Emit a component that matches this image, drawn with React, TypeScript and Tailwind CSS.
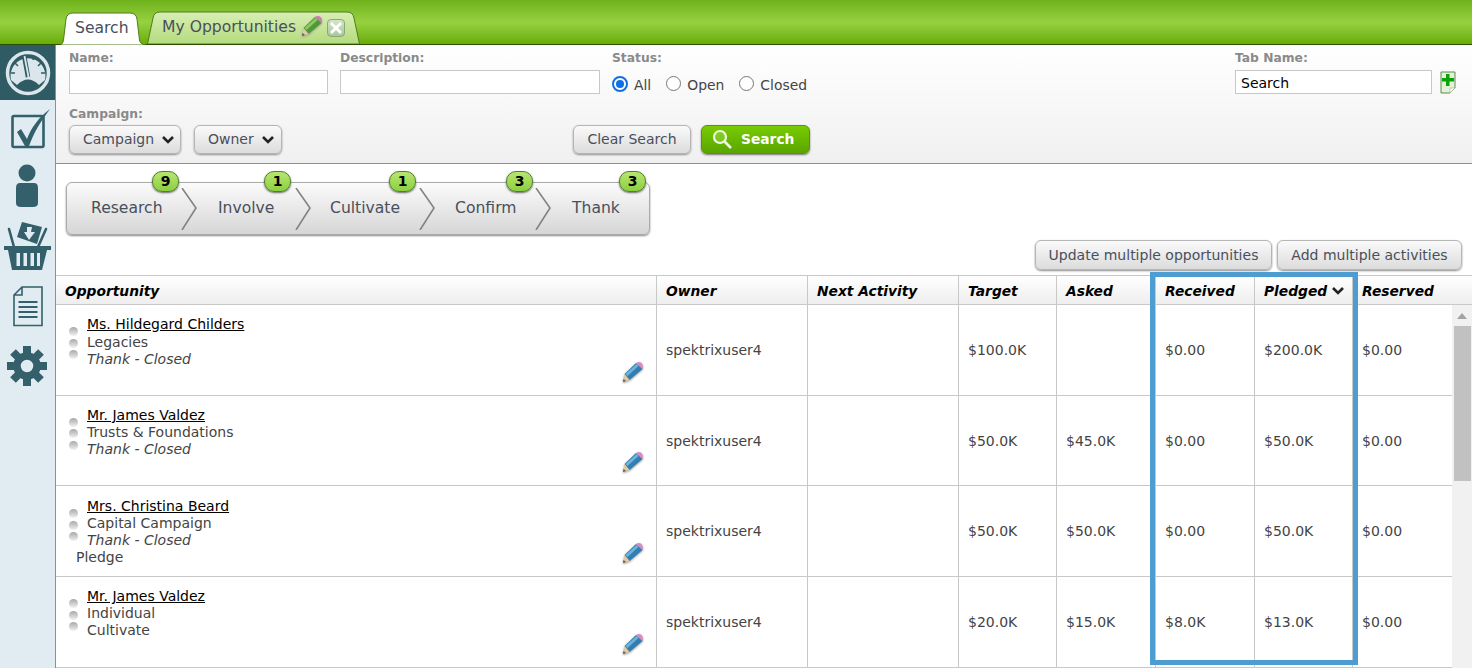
import React from "react";

const font = { fontFamily: '"DejaVu Sans", Verdana, sans-serif' };

function Gauge() {
  return (
    <svg width="46" height="46" viewBox="0 0 46 46">
      <circle cx="23" cy="23" r="20.5" fill="none" stroke="#dbe6ec" strokeWidth="3.5" />
      <path d="M6 30 A17.500 17.500 0 1 1 40 30 L34 35 Q23 24 12 35 Z" fill="#dbe6ec" />
      <path d="M19 5 L23 27" stroke="#2f5b64" strokeWidth="4.5" />
      <path d="M19.500 6 L23.500 27" stroke="#dbe6ec" strokeWidth="1.8" />
      <path d="M10 13l3 3M36 13l-3 3M6 23h4M40 23h-4M29 6l-1 4" stroke="#2f5b64" strokeWidth="1.5" />
    </svg>
  );
}
function CheckIcon() {
  return (
    <svg width="40" height="42" viewBox="0 0 40 42">
      <rect x="1.500" y="8" width="31" height="31" rx="1.5" fill="none" stroke="#33606a" strokeWidth="2.6" />
      <path d="M6 24 L10 21 L16 31 C20 20 28 9 39 1 C30 13 23 24 18 38 L14 38 Z" fill="#33606a" />
    </svg>
  );
}
function Person() {
  return (
    <svg width="24" height="44" viewBox="0 0 24 44">
      <circle cx="12" cy="9" r="8.5" fill="#33606a" />
      <path d="M5 19 H19 Q23 19 23 24 V39 Q23 43 18 43 H6 Q1 43 1 39 V24 Q1 19 5 19 Z" fill="#33606a" />
    </svg>
  );
}
function Basket() {
  return (
    <svg width="47" height="50" viewBox="0 0 47 50">
      <path d="M18 1 L38 6 L33 23 L13 16 Z" fill="#33606a" />
      <path d="M23 6 h5 l-1 5 h4 l-6 8 l-5 -8 h3 Z" fill="#e0ebf2" />
      <path d="M5 8 L10 26 M42 8 L34 26" stroke="#33606a" strokeWidth="2.6" strokeLinecap="round" />
      <path d="M0 25 H47 V29 H43 L38 49 H8 L4 29 H0 Z" fill="#33606a" />
      <path d="M12.500 32h3.500v13h-3.500zM19.500 32h3.500v13h-3.500zM26.500 32h3.500v13h-3.500zM33 32h3v13h-3z" fill="#e0ebf2" />
    </svg>
  );
}
function Doc() {
  return (
    <svg width="30" height="41" viewBox="0 0 30 41">
      <path d="M9 1 H29 V39.500 H1 V9 Z M9 1 V9 H1" fill="none" stroke="#33606a" strokeWidth="1.6" />
      <path d="M5.500 15h19v2h-19zM5.500 20h19v2h-19zM5.500 25h19v2h-19zM5.500 30h19v2h-19z" fill="#33606a" />
    </svg>
  );
}
function Gear() {
  return (
    <svg width="40" height="40" viewBox="0 0 40 40">
      <circle cx="20" cy="20" r="10" fill="none" stroke="#33606a" strokeWidth="7.5" />
      <g stroke="#33606a" strokeWidth="8">
        <path d="M20 0v8M20 32v8M0 20h8M32 20h8M6 6l6 6M28 28l6 6M34 6l-6 6M12 28l-6 6" />
      </g>
    </svg>
  );
}
function Pencil({ body, tip, shade }: { body: string; tip: string; shade: string }) {
  return (
    <svg className="drop-shadow-[0_1px_1px_#999]" width="22" height="22" viewBox="0 0 22 22">
      <path d="M14 2 L20.500 8 L7.500 19 L2.500 13 Z" fill={body} />
      <path d="M3.500 13 L14.500 3 L16.500 5 L5.500 15 Z" fill={shade} opacity="0.7" />
      <path d="M14 2 Q17 0 19.500 2 Q21.800 4.500 20.500 8 Z" fill={tip} />
      <path d="M2.500 13 L7.500 19 L1 21 Z" fill="#e2c9a0" />
      <path d="M1.500 18 L4 20 L1 21 Z" fill="#555" />
    </svg>
  );
}
const BluePencil = () => <Pencil body="#2f7fb5" tip="#d98cc0" shade="#8cc6ea" />;
const GreenPencil = () => <Pencil body="#4f9a35" tip="#d478b4" shade="#a8dc7a" />;

function Caret() {
  return (
    <svg width="14" height="10" viewBox="0 0 14 10">
      <path d="M2 2 L7 7 L12 2" fill="none" stroke="#222" strokeWidth="2.600" />
    </svg>
  );
}

function Dot() {
  return <span className="block w-[9px] h-[9px] rounded-full bg-gradient-to-b from-[#a8a8a8] to-[#f2f2f2]" />;
}

const btn =
  "h-[29px] rounded-[6px] border border-[#b5b5b5] bg-gradient-to-b from-[#fafafa] to-[#dcdcdc] shadow-[0_1px_2px_#8f8f8f] text-[14px] text-[#4a4f5c] flex items-center";

const label = "text-[12.3px] leading-[16px] font-bold text-[#8a8a8a]";
const input = "h-[24px] border border-[#c8c8c8] bg-white";

function Radio({ checked, text, className }: { checked?: boolean; text: string; className?: string }) {
  return (
    <span className={"flex items-center gap-[6px] text-[13.9px] text-[#444] " + (className ?? "")}>
      {checked ? (
        <span className="w-[16px] h-[16px] rounded-full border-2 border-[#0f6fe8] flex items-center justify-center bg-white">
          <span className="block w-[8px] h-[8px] rounded-full bg-[#0f6fe8]" />
        </span>
      ) : (
        <span className="w-[15px] h-[15px] rounded-full border border-[#777] bg-white" />
      )}
      <span className="pt-[2px]">{text}</span>
    </span>
  );
}

const stages = [
  { name: "Research", count: "9", w: "w-[130px]", pl: "pl-[24px]", badge: "right-[18px]", chevron: true },
  { name: "Involve", count: "1", w: "w-[114px]", pl: "pl-[21px]", badge: "right-[20px]", chevron: true },
  { name: "Cultivate", count: "1", w: "w-[124px]", pl: "pl-[19px]", badge: "right-[19px]", chevron: true },
  { name: "Confirm", count: "3", w: "w-[116px]", pl: "pl-[20px]", badge: "right-[18px]", chevron: true },
  { name: "Thank", count: "3", w: "w-[100px]", pl: "pl-[21px]", badge: "right-[5px]", chevron: false },
];

function Stage({ s }: { s: (typeof stages)[number] }) {
  return (
    <div className={"relative h-full flex items-center shrink-0 text-[15.6px] text-[#4a4f5c] " + s.w + " " + s.pl}>
      <span>{s.name}</span>
      {s.chevron && (
        <svg className="absolute right-0 top-[5px]" width="16" height="42" viewBox="0 0 16 42">
          <path d="M1 0 L15 20 L1 42" fill="none" stroke="#828282" strokeWidth="1.6" />
        </svg>
      )}
      <span
        className={
          "absolute -top-[12px] w-[27px] h-[21px] rounded-[10px] border border-[#4e7f2a] bg-gradient-to-b from-[#b8e66f] to-[#8ccf3f] shadow-[0_1px_2px_#666] flex items-center justify-center text-[14px] font-bold text-black " +
          s.badge
        }
      >
        {s.count}
      </span>
    </div>
  );
}

const cols = "grid grid-cols-[600px_151px_151px_98px_99px_99px_98px_100px]";

const rows = [
  { name: "Ms. Hildegard Childers", type: "Legacies", stage: "Thank - Closed", extra: "", target: "$100.0K", asked: "", rec: "$0.00", pl: "$200.0K", pt: "pt-[11px]", gap: "mb-[1px]" },
  { name: "Mr. James Valdez", type: "Trusts & Foundations", stage: "Thank - Closed", extra: "", target: "$50.0K", asked: "$45.0K", rec: "$0.00", pl: "$50.0K", pt: "pt-[11px]", gap: "" },
  { name: "Mrs. Christina Beard", type: "Capital Campaign", stage: "Thank - Closed", extra: "Pledge", target: "$50.0K", asked: "$50.0K", rec: "$0.00", pl: "$50.0K", pt: "pt-[12px]", gap: "" },
  { name: "Mr. James Valdez", type: "Individual", stage: "", extra: "", plain: "Cultivate", target: "$20.0K", asked: "$15.0K", rec: "$8.0K", pl: "$13.0K", pt: "pt-[11px]", gap: "" },
] as { name: string; type: string; stage: string; extra: string; plain?: string; target: string; asked: string; rec: string; pl: string; pt: string; gap: string }[];

const cell = "border-l border-[#c8c8c8] pl-[9px] pt-[1px] flex items-center text-[14px] text-[#444]";
const head = "border-l border-[#c8c8c8] pl-[9px] pt-[2px] flex items-center text-[13.8px] font-bold italic text-black";

export default function App() {
  return (
    <div style={font} className="relative w-[1472px] h-[668px] overflow-hidden bg-white flex flex-col">
      {/* top green bar */}
      <div className="h-[45px] shrink-0 bg-gradient-to-b from-[#6eb21a] via-[#97d13f] to-[#69ad00] border-b border-[#2c4f00] pl-[60px] flex items-end gap-[1px]">
        <div className="relative w-[86px] h-[33px] -mb-px pl-[15px] pt-[1px] flex items-center text-[15.6px] text-[#4a4f5c]">
          <svg className="absolute inset-0" width="86" height="33" viewBox="0 0 86 33">
            <path d="M0.500 33 Q3 32 3.500 28 L6 7 Q7 1 13 1 H70 Q76 1 77 7 L79.500 28 Q80 32 85.500 33 Z" fill="#fff" stroke="#4d7d1c" />
          </svg>
          <span className="relative">Search</span>
        </div>
        <div className="relative w-[213px] h-[33px] pl-[15px] flex items-center text-[15.6px] text-[#4a4f5c]">
          <svg className="absolute inset-0" width="213" height="33" viewBox="0 0 213 33">
            <defs>
              <linearGradient id="tabg" x1="0" y1="0" x2="0" y2="1">
                <stop offset="0" stopColor="#d8efb4" />
                <stop offset="1" stopColor="#b4db7e" />
              </linearGradient>
            </defs>
            <path d="M0.500 33 L6 7 Q7 1 13 1 H200 Q206 1 207 7 L212.500 33 Z" fill="url(#tabg)" stroke="#4d7d1c" />
          </svg>
          <span className="relative">My Opportunities</span>
          <span className="relative ml-[5px] -mt-[3px]"><GreenPencil /></span>
          <span className="relative ml-[4px] w-[18px] h-[18px] rounded-[4px] border border-[#8aa87a] bg-gradient-to-b from-[#d5e3ca] to-[#a9c79a] flex items-center justify-center">
            <svg width="14" height="14" viewBox="0 0 14 14">
              <path d="M2 2 L12 12 M12 2 L2 12" stroke="#fff" strokeWidth="3" />
            </svg>
          </span>
        </div>
      </div>

      <div className="flex flex-1 min-h-0">
        {/* sidebar */}
        <div className="w-[56px] shrink-0 bg-[#e0ebf2] border-r border-[#8f8f8f] flex flex-col items-center">
          <div className="w-[55px] h-[55px] bg-[#2f5b64] flex items-center justify-center">
            <Gauge />
          </div>
          <div className="mt-[8px] ml-[6px]"><CheckIcon /></div>
          <div className="mt-[14px] -ml-[1px]"><Person /></div>
          <div className="mt-[13px]"><Basket /></div>
          <div className="mt-[15px]"><Doc /></div>
          <div className="mt-[19px] -ml-[1px]"><Gear /></div>
        </div>

        {/* main */}
        <div className="flex-1 min-w-0 flex flex-col">
          {/* search panel */}
          <div className="h-[119px] shrink-0 border-b border-[#8f8f8f] bg-gradient-to-b from-white to-[#f0f0f0] pl-[13px] pt-[5px]">
            <div className="flex">
              <div className="w-[259px]">
                <div className={label}>Name:</div>
                <div className={input + " mt-[4px]"} />
              </div>
              <div className="w-[260px] ml-[12px]">
                <div className={label}>Description:</div>
                <div className={input + " mt-[4px]"} />
              </div>
              <div className="w-[623px] ml-[12px]">
                <div className={label}>Status:</div>
                <div className="flex items-center h-[24px] mt-[6px]">
                  <Radio checked text="All" />
                  <Radio text="Open" className="ml-[15px]" />
                  <Radio text="Closed" className="ml-[15px]" />
                </div>
              </div>
              <div className="w-[197px]">
                <div className={label}>Tab Name:</div>
                <div className={input + " mt-[4px] flex items-center pl-[5px] pt-[2px] text-[14px] text-black"}>Search</div>
              </div>
              <svg className="ml-[8px] mt-[21px]" width="16" height="23" viewBox="0 0 16 23">
                <path d="M1 1 H15 V17 L10 22 H1 Z" fill="#e4f0d8" stroke="#5d8a4f" />
                <path d="M10 22 V17 H15 Z" fill="#fff" stroke="#9ab08f" strokeWidth="0.6" />
                <path d="M6 3h3.500v4H14v3.500H9.500V15H6v-4.500H2V7h4Z" fill="#0aa30a" />
              </svg>
            </div>
            <div className="flex items-end mt-[10px]">
              <div className="w-[504px]">
                <div className={label}>Campaign:</div>
                <div className="flex mt-[3px] gap-[13px]">
                  <div className={btn + " w-[112px] gap-[7px] pl-[13px]"}>Campaign <Caret /></div>
                  <div className={btn + " w-[88px] gap-[7px] pl-[13px]"}>Owner <Caret /></div>
                </div>
              </div>
              <div className={btn + " w-[118px] justify-center"}>Clear Search</div>
              <div className="h-[29px] w-[109px] ml-[10px] pl-[10px] rounded-[6px] border border-[#5b9409] bg-gradient-to-b from-[#78cc00] to-[#5aa500] shadow-[0_1px_2px_#777] flex items-center gap-[8px] text-[13.8px] font-bold text-white">
                <svg width="21" height="21" viewBox="0 0 21 21">
                  <circle cx="8" cy="8" r="6" fill="#9fdc5c" fillOpacity="0.4" stroke="#f0f8e0" strokeWidth="2.2" />
                  <path d="M12.500 12.500 L19 19" stroke="#f0f8e0" strokeWidth="2.6" />
                </svg>
                Search
              </div>
            </div>
          </div>

          {/* pipeline and actions */}
          <div className="h-[111px] shrink-0 relative pl-[10px] pt-[18px]">
            <div className="h-[53px] w-[584px] flex rounded-[6px] border border-[#aaa] bg-gradient-to-b from-[#fbfbfb] to-[#d6d6d6] shadow-[0_1px_2px_#888]">
              {stages.map((s) => (
                <Stage key={s.name} s={s} />
              ))}
            </div>
            <div className="flex justify-end gap-[5px] pr-[10px] mt-[5px]">
              <div className={btn + " w-[237px] h-[30px] justify-center"}>Update multiple opportunities</div>
              <div className={btn + " w-[185px] h-[30px] justify-center"}>Add multiple activities</div>
            </div>
          </div>

          {/* table */}
          <div className="flex-1 min-h-0 border-t border-[#c8c8c8] flex flex-col">
            <div className={cols + " w-[1416px] h-[29px] shrink-0 bg-gradient-to-b from-white to-[#eeeeee] border-b border-[#c8c8c8]"}>
              <div className="pl-[9px] pt-[2px] flex items-center text-[13.8px] font-bold italic text-black">Opportunity</div>
              <div className={head}>Owner</div>
              <div className={head}>Next Activity</div>
              <div className={head}>Target</div>
              <div className={head}>Asked</div>
              <div className={head}>Received</div>
              <div className={head + " gap-[4px]"}>Pledged <Caret /></div>
              <div className={head}>Reserved</div>
            </div>
            <div className="flex flex-1 min-h-0">
              <div className="w-[1396px] shrink-0">
                {rows.map((r, i) => (
                  <div key={i} className={cols + " h-[90.7px] border-b border-[#c8c8c8]"}>
                    <div className={"relative pl-[13px] flex " + r.pt}>
                      <div className="flex flex-col gap-[2.500px] pt-[11px] w-[18px]">
                        <Dot />
                        <Dot />
                        <Dot />
                      </div>
                      <div className="text-[14px] leading-[17px] text-[#444]">
                        <div className={"text-black underline " + r.gap}>{r.name}</div>
                        <div>{r.type}</div>
                        {r.stage && <div className="italic">{r.stage}</div>}
                        {r.plain && <div>{r.plain}</div>}
                        {r.extra && <div className="-ml-[11px]">{r.extra}</div>}
                      </div>
                      <div className="absolute right-[12px] bottom-[12px]">
                        <BluePencil />
                      </div>
                    </div>
                    <div className={cell}>spektrixuser4</div>
                    <div className={cell} />
                    <div className={cell}>{r.target}</div>
                    <div className={cell}>{r.asked}</div>
                    <div className={cell}>{r.rec}</div>
                    <div className={cell}>{r.pl}</div>
                    <div className={cell}>$0.00</div>
                  </div>
                ))}
              </div>
              <div className="flex-1 bg-[#f1f1f1] flex flex-col items-center">
                <svg className="mt-[8px]" width="10" height="6" viewBox="0 0 10 6">
                  <path d="M5 0 L10 6 H0 Z" fill="#a3a3a3" />
                </svg>
                <div className="mt-[7px] w-[17px] h-[155px] bg-[#c1c1c1]" />
              </div>
            </div>
          </div>
        </div>
      </div>

      {/* highlight overlay */}
      <div className="absolute left-[1150px] top-[272px] w-[208px] h-[393px] border-[5px] border-[#4d9dd2] pointer-events-none" />
    </div>
  );
}
